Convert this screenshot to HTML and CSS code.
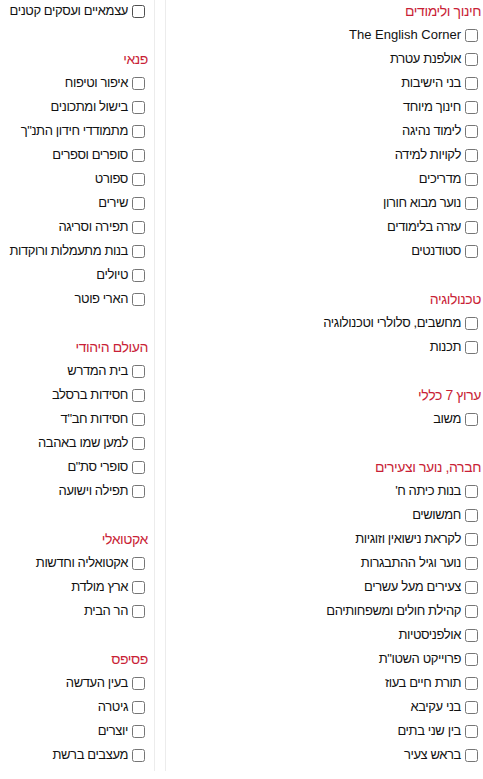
FILE: index.html
```html
<!DOCTYPE html>
<html lang="he" dir="rtl">
<head>
<meta charset="utf-8">
<title>קטגוריות</title>
<link rel="stylesheet" href="styles.css">
</head>
<body>
<div class="columns">
  <div class="col col-main">
    <section class="group">
      <h3 class="group-title">חינוך ולימודים</h3>
      <label class="item"><input type="checkbox"><span class="latin" lang="en">The English Corner</span></label>
      <label class="item"><input type="checkbox"><span>אולפנת עטרת</span></label>
      <label class="item"><input type="checkbox"><span>בני הישיבות</span></label>
      <label class="item"><input type="checkbox"><span>חינוך מיוחד</span></label>
      <label class="item"><input type="checkbox"><span>לימוד נהיגה</span></label>
      <label class="item"><input type="checkbox"><span>לקויות למידה</span></label>
      <label class="item"><input type="checkbox"><span>מדריכים</span></label>
      <label class="item"><input type="checkbox"><span>נוער מבוא חורון</span></label>
      <label class="item"><input type="checkbox"><span>עזרה בלימודים</span></label>
      <label class="item"><input type="checkbox"><span>סטודנטים</span></label>
    </section>
    <section class="group">
      <h3 class="group-title">טכנולוגיה</h3>
      <label class="item"><input type="checkbox"><span>מחשבים, סלולרי וטכנולוגיה</span></label>
      <label class="item"><input type="checkbox"><span>תכנות</span></label>
    </section>
    <section class="group">
      <h3 class="group-title">ערוץ 7 כללי</h3>
      <label class="item"><input type="checkbox"><span>משוב</span></label>
    </section>
    <section class="group">
      <h3 class="group-title">חברה, נוער וצעירים</h3>
      <label class="item"><input type="checkbox"><span>בנות כיתה ח'</span></label>
      <label class="item"><input type="checkbox"><span>חמשושים</span></label>
      <label class="item"><input type="checkbox"><span>לקראת נישואין וזוגיות</span></label>
      <label class="item"><input type="checkbox"><span>נוער וגיל ההתבגרות</span></label>
      <label class="item"><input type="checkbox"><span>צעירים מעל עשרים</span></label>
      <label class="item"><input type="checkbox"><span>קהילת חולים ומשפחותיהם</span></label>
      <label class="item"><input type="checkbox"><span>אולפניסטיות</span></label>
      <label class="item"><input type="checkbox"><span>פרוייקט השטו"ת</span></label>
      <label class="item"><input type="checkbox"><span>תורת חיים בעוז</span></label>
      <label class="item"><input type="checkbox"><span>בני עקיבא</span></label>
      <label class="item"><input type="checkbox"><span>בין שני בתים</span></label>
      <label class="item"><input type="checkbox"><span>בראש צעיר</span></label>
    </section>
  </div>
  <div class="col col-side">
    <section class="group">
      <label class="item"><input type="checkbox"><span>עצמאיים ועסקים קטנים</span></label>
    </section>
    <section class="group">
      <h3 class="group-title">פנאי</h3>
      <label class="item"><input type="checkbox"><span>איפור וטיפוח</span></label>
      <label class="item"><input type="checkbox"><span>בישול ומתכונים</span></label>
      <label class="item"><input type="checkbox"><span>מתמודדי חידון התנ"ך</span></label>
      <label class="item"><input type="checkbox"><span>סופרים וספרים</span></label>
      <label class="item"><input type="checkbox"><span>ספורט</span></label>
      <label class="item"><input type="checkbox"><span>שירים</span></label>
      <label class="item"><input type="checkbox"><span>תפירה וסריגה</span></label>
      <label class="item"><input type="checkbox"><span>בנות מתעמלות ורוקדות</span></label>
      <label class="item"><input type="checkbox"><span>טיולים</span></label>
      <label class="item"><input type="checkbox"><span>הארי פוטר</span></label>
    </section>
    <section class="group">
      <h3 class="group-title">העולם היהודי</h3>
      <label class="item"><input type="checkbox"><span>בית המדרש</span></label>
      <label class="item"><input type="checkbox"><span>חסידות ברסלב</span></label>
      <label class="item"><input type="checkbox"><span>חסידות חב"ד</span></label>
      <label class="item"><input type="checkbox"><span>למען שמו באהבה</span></label>
      <label class="item"><input type="checkbox"><span>סופרי סת"ם</span></label>
      <label class="item"><input type="checkbox"><span>תפילה וישועה</span></label>
    </section>
    <section class="group">
      <h3 class="group-title">אקטואלי</h3>
      <label class="item"><input type="checkbox"><span>אקטואליה וחדשות</span></label>
      <label class="item"><input type="checkbox"><span>ארץ מולדת</span></label>
      <label class="item"><input type="checkbox"><span>הר הבית</span></label>
    </section>
    <section class="group">
      <h3 class="group-title">פסיפס</h3>
      <label class="item"><input type="checkbox"><span>בעין העדשה</span></label>
      <label class="item"><input type="checkbox"><span>גיטרה</span></label>
      <label class="item"><input type="checkbox"><span>יוצרים</span></label>
      <label class="item"><input type="checkbox"><span>מעצבים ברשת</span></label>
    </section>
  </div>
</div>
</body>
</html>
```
FILE: styles.css
```css
html, body {
  margin: 0;
  padding: 0;
  background: #ffffff;
}
body {
  font-family: "Liberation Sans", Arial, sans-serif;
  font-size: 13px;
  letter-spacing: -0.4px;
  color: #111111;
}
.columns {
  display: flex;
  flex-direction: row;
  align-items: flex-start;
  gap: 10px;
}
.col {
  box-sizing: border-box;
  height: 771px;
}
.col-main {
  width: 318px;
  padding-right: 2px;
  border-left: 1px solid #ececec;
}
.col-side {
  width: 155px;
  margin-top: -1px;
  height: 772px;
  padding-right: 6px;
  border-right: 1px solid #ececec;
}
.group + .group {
  margin-top: 25px;
}
.group-title {
  margin: 0;
  height: 23px;
  line-height: 23px;
  font-size: 14px;
  font-weight: normal;
  color: #c91f37;
}
.item {
  display: flex;
  align-items: center;
  height: 24px;
  line-height: 24px;
}
.item input {
  width: 13px;
  height: 13px;
  margin: 0 3px 0 4px;
  flex: none;
}
.latin {
  letter-spacing: 0;
}
```
